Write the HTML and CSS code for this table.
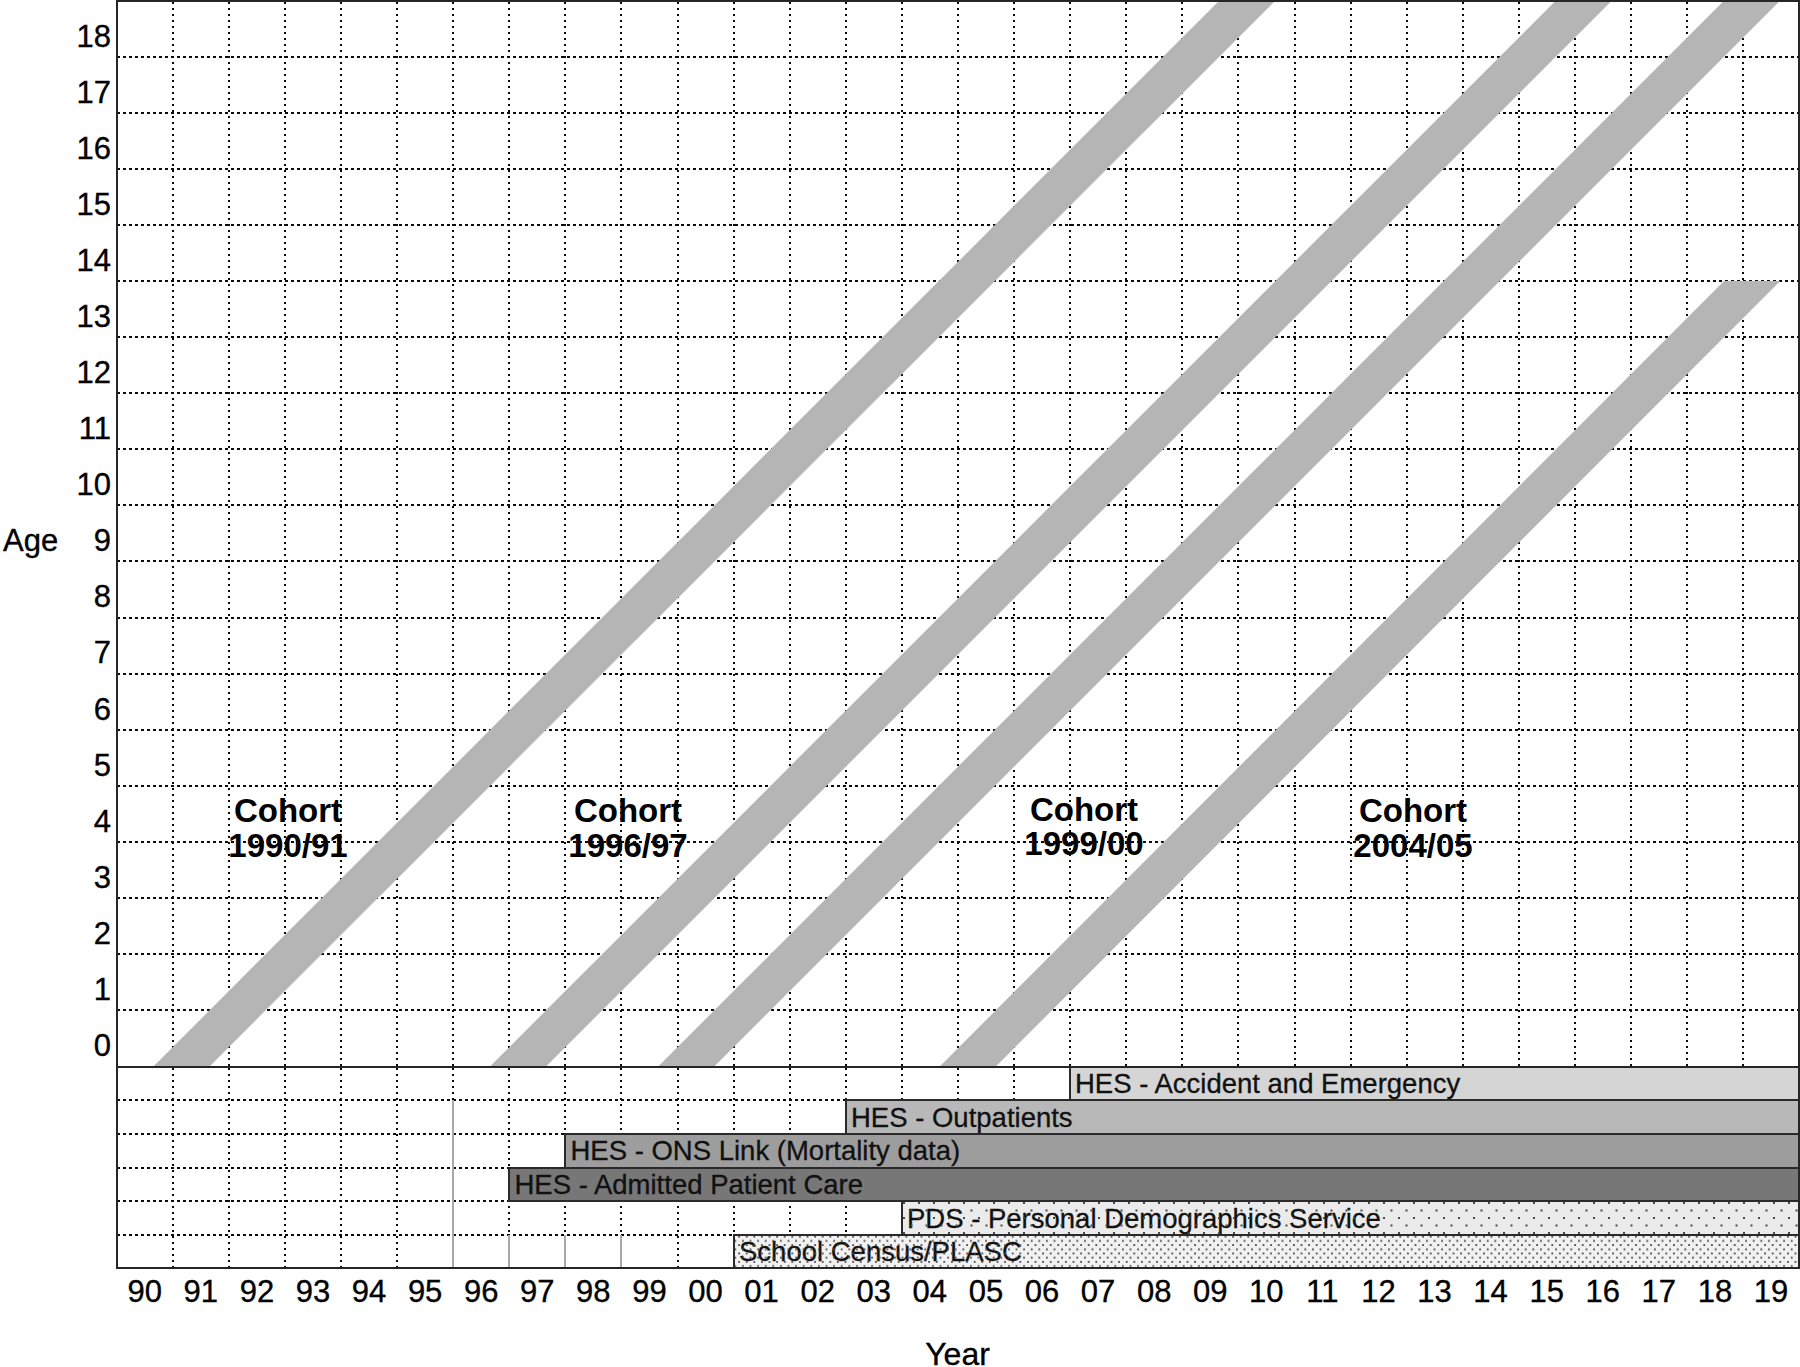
FILE: index.html
```html
<!DOCTYPE html>
<html lang="en">
<head>
<meta charset="utf-8">
<title>Cohort data coverage</title>
<link rel="stylesheet" href="styles.css">
</head>
<body>
<div class="figure">
  <div class="y-axis">
    <span class="axis-title age">Age</span>
    <span class="tick">18</span>
    <span class="tick">17</span>
    <span class="tick">16</span>
    <span class="tick">15</span>
    <span class="tick">14</span>
    <span class="tick">13</span>
    <span class="tick">12</span>
    <span class="tick">11</span>
    <span class="tick">10</span>
    <span class="tick">9</span>
    <span class="tick">8</span>
    <span class="tick">7</span>
    <span class="tick">6</span>
    <span class="tick">5</span>
    <span class="tick">4</span>
    <span class="tick">3</span>
    <span class="tick">2</span>
    <span class="tick">1</span>
    <span class="tick">0</span>
  </div>

  <svg class="chart" width="1685" height="1270" viewBox="115 0 1685 1270" xmlns="http://www.w3.org/2000/svg">
    <defs>
      <pattern id="dotsSparse" width="15" height="15" patternUnits="userSpaceOnUse">
        <rect class="dot" x="3" y="2" width="2" height="2"/>
        <rect class="dot" x="10.5" y="9.5" width="2" height="2"/>
      </pattern>
      <pattern id="dotsDense" width="7.6" height="8.4" patternUnits="userSpaceOnUse">
        <rect class="dot" x="1" y="1" width="1.8" height="1.8"/>
        <rect class="dot" x="4.8" y="5.2" width="1.8" height="1.8"/>
      </pattern>
    </defs>

    <!-- cohort labels (under the grid) -->
    <text class="cohort" x="288" y="822">Cohort</text>
    <text class="cohort" x="288" y="857">1990/91</text>
    <text class="cohort" x="628" y="822">Cohort</text>
    <text class="cohort" x="628" y="857">1996/97</text>
    <text class="cohort" x="1084" y="821">Cohort</text>
    <text class="cohort" x="1084" y="855">1999/00</text>
    <text class="cohort" x="1413" y="822">Cohort</text>
    <text class="cohort" x="1413" y="857">2004/05</text>

    <!-- upper grid -->
    <path class="gh" d="M117 57H1799M117 113H1799M117 169H1799M117 225H1799M117 281H1799M117 337H1799M117 393H1799M117 449H1799M117 505H1799M117 561H1799M117 618H1799M117 674H1799M117 730H1799M117 786H1799M117 842H1799M117 898H1799M117 954H1799M117 1010H1799"/>
    <path class="gv" d="M173 2V1067M229 2V1067M285 2V1067M341 2V1067M397 2V1067M453 2V1067M509 2V1067M565 2V1067M621 2V1067M678 2V1067M734 2V1067M790 2V1067M846 2V1067M902 2V1067M958 2V1067M1014 2V1067M1070 2V1067M1126 2V1067M1182 2V1067M1238 2V1067M1295 2V1067M1351 2V1067M1407 2V1067M1463 2V1067M1519 2V1067M1575 2V1067M1631 2V1067M1687 2V1067M1743 2V1067"/>

    <!-- cohort bands -->
    <polygon class="band" points="153.16,1066.7 209.25,1066.7 1274.95,1 1218.86,1"/>
    <polygon class="band" points="489.68,1066.7 545.77,1066.7 1611.47,1 1555.38,1"/>
    <polygon class="band" points="657.94,1066.7 714.03,1066.7 1779.73,1 1723.64,1"/>
    <polygon class="band" points="939.5,1066.7 995.6,1066.7 1780.14,281.02 1724.05,281.02"/>

    <!-- lower grid -->
    <path class="gh" d="M117 1100H1799M117 1134H1799M117 1168H1799M117 1201H1799M117 1235H1799"/>
    <path class="gv" d="M173 1068V1268M229 1068V1268M285 1068V1268M341 1068V1268M397 1068V1268M453 1068V1100M509 1068V1235M565 1068V1235M621 1068V1235M678 1068V1268M734 1068V1268M790 1068V1268M846 1068V1268M902 1068V1268M958 1068V1268M1014 1068V1268M1070 1068V1268M1126 1068V1268M1182 1068V1268M1238 1068V1268M1295 1068V1268M1351 1068V1268M1407 1068V1268M1463 1068V1268M1519 1068V1268M1575 1068V1268M1631 1068V1268M1687 1068V1268M1743 1068V1268"/>
    <path class="gs" d="M453 1100V1268M509 1235V1268M565 1235V1268M621 1235V1268"/>

    <!-- data source bars -->
    <rect class="bar bar-ae" x="1070" y="1067" width="729" height="33"/>
    <text class="bar-label" x="1075" y="1093.2">HES - Accident and Emergency</text>

    <rect class="bar bar-op" x="846" y="1100" width="953" height="34"/>
    <text class="bar-label" x="851" y="1126.8">HES - Outpatients</text>

    <rect class="bar bar-ons" x="565" y="1134" width="1234" height="34"/>
    <text class="bar-label" x="570.5" y="1160.4">HES - ONS Link (Mortality data)</text>

    <rect class="bar bar-apc" x="509" y="1168" width="1290" height="33"/>
    <text class="bar-label" x="514.5" y="1194">HES - Admitted Patient Care</text>

    <rect class="bar bar-pds" x="902" y="1201" width="897" height="34"/>
    <text class="bar-label" x="907" y="1227.6">PDS - Personal Demographics Service</text>
    <rect class="dots dots-pds" x="903" y="1202" width="895" height="32"/>

    <rect class="bar bar-sc" x="734" y="1235" width="1065" height="33"/>
    <text class="bar-label" x="739" y="1261.2">School Census/PLASC</text>
    <rect class="dots dots-sc" x="735" y="1236" width="1063" height="31"/>

    <!-- frame -->
    <rect class="frame" x="117" y="1" width="1682" height="1267"/>
    <path class="frame" d="M117 1067H1799"/>
  </svg>

  <div class="x-axis">
    <span>90</span><span>91</span><span>92</span><span>93</span><span>94</span><span>95</span>
    <span>96</span><span>97</span><span>98</span><span>99</span><span>00</span><span>01</span>
    <span>02</span><span>03</span><span>04</span><span>05</span><span>06</span><span>07</span>
    <span>08</span><span>09</span><span>10</span><span>11</span><span>12</span><span>13</span>
    <span>14</span><span>15</span><span>16</span><span>17</span><span>18</span><span>19</span>
  </div>
  <div class="axis-title year">Year</div>
</div>
</body>
</html>
```

FILE: styles.css
```css
html, body {
  margin: 0;
  padding: 0;
  background: #ffffff;
  overflow: hidden;
}

body {
  font-family: "Liberation Sans", Arial, sans-serif;
  color: #000;
}

.figure {
  display: grid;
  grid-template-columns: 115px 1685px;
  grid-template-rows: 1270px 43px 54px;
  width: 1800px;
  height: 1367px;
}

.y-axis {
  grid-column: 1;
  grid-row: 1;
  display: grid;
  grid-template-columns: 1fr auto;
  grid-template-rows: repeat(19, 56.08px);
  align-content: start;
  padding-top: 0.6px;
}

.tick,
.axis-title,
.x-axis {
  -webkit-text-stroke: 0.35px #000;
}

.tick {
  grid-column: 2;
  font-size: 31px;
  line-height: 42px;
  padding-top: 15px;
  padding-right: 4px;
  text-align: right;
}

.axis-title {
  font-size: 31px;
}

.age {
  grid-column: 1;
  grid-row: 10;
  line-height: 42px;
  padding-top: 15px;
  padding-left: 3px;
}

.chart {
  grid-column: 2;
  grid-row: 1;
  display: block;
}

.x-axis {
  grid-column: 2;
  grid-row: 2;
  display: grid;
  grid-template-columns: repeat(30, 56.087px);
  padding-left: 1.7px;
  font-size: 31px;
  line-height: 43px;
  text-align: center;
}

.year {
  grid-column: 2;
  grid-row: 3;
  text-align: center;
  font-size: 32px;
  line-height: 26px;
  padding-top: 27.5px;
}

/* chart parts */
.gh {
  fill: none;
  stroke: #0a0a0a;
  stroke-width: 2;
  stroke-dasharray: 3 3;
  shape-rendering: crispEdges;
}

.gv {
  fill: none;
  stroke: #0a0a0a;
  stroke-width: 2;
  stroke-dasharray: 2 4;
  shape-rendering: crispEdges;
}

.gs {
  fill: none;
  stroke: #a9a9a9;
  stroke-width: 2;
  shape-rendering: crispEdges;
}

.band {
  fill: #b5b5b5;
}

.frame {
  fill: none;
  stroke: #262626;
  stroke-width: 2;
  shape-rendering: crispEdges;
}

.cohort {
  font-family: "Liberation Sans", Arial, sans-serif;
  font-weight: bold;
  font-size: 33px;
  text-anchor: middle;
  fill: #000;
}

.bar {
  stroke: #2a2a2a;
  stroke-width: 2;
  shape-rendering: crispEdges;
}

.bar-ae { fill: #d5d5d5; }
.bar-op { fill: #b8b8b8; }
.bar-ons { fill: #9d9d9d; }
.bar-apc { fill: #777777; }
.bar-pds { fill: #ebebeb; }
.bar-sc { fill: #f1f1f1; }

.bar-label {
  font-family: "Liberation Sans", Arial, sans-serif;
  font-size: 27.5px;
  fill: #111;
  stroke: #111;
  stroke-width: 0.3px;
}

.dot {
  fill: #4a4a4a;
}

.dots-pds { fill: url(#dotsSparse); }
.dots-sc { fill: url(#dotsDense); }
```
